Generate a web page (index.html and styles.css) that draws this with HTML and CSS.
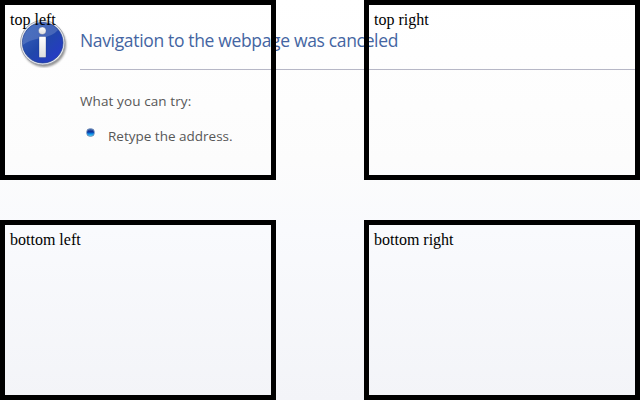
FILE: index.html
```html
<!DOCTYPE html>
<html lang="en">
<head>
<meta charset="utf-8">
<title>Navigation Canceled</title>
<link rel="stylesheet" href="styles.css">
</head>
<body>
<main class="error">
  <svg class="info" viewBox="0 0 48 48" width="48" height="48" aria-hidden="true">
    <defs>
      <linearGradient id="blue" x1="0" y1="0" x2="1" y2="1">
        <stop offset="0" stop-color="#3c68bd"/>
        <stop offset=".5" stop-color="#2147aa"/>
        <stop offset="1" stop-color="#2736cf"/>
      </linearGradient>
      <linearGradient id="shine" x1="0" y1="0" x2="1" y2="1">
        <stop offset="0" stop-color="#fff" stop-opacity=".08"/>
        <stop offset="1" stop-color="#fff" stop-opacity=".22"/>
      </linearGradient>
      <linearGradient id="glyph" x1="0" y1="0" x2="0" y2="1">
        <stop offset="0" stop-color="#fff"/>
        <stop offset="1" stop-color="#dedede"/>
      </linearGradient>
      <filter id="soft" x="-20%" y="-20%" width="140%" height="140%"><feGaussianBlur stdDeviation="1.1"/></filter>
    </defs>
    <circle cx="24" cy="25" r="22" fill="#555" opacity=".65" filter="url(#soft)"/>
    <circle cx="22.7" cy="22.7" r="22.2" fill="#e6e8ed" stroke="#9296a0" stroke-width=".8"/>
    <circle cx="22.7" cy="22.7" r="20.3" fill="url(#blue)" stroke="#1e3d91" stroke-width=".7"/>
    <path d="M2.8 25A20 20 0 0 1 38 10Q33 16 21 18Q9 20 2.8 25Z" fill="url(#shine)"/>
    <circle cx="22.3" cy="10.8" r="3.8" fill="url(#glyph)" stroke="#17317d" stroke-opacity=".5" stroke-width=".6"/>
    <rect x="19" y="16.5" width="7" height="21" rx=".8" fill="url(#glyph)" stroke="#17317d" stroke-opacity=".5" stroke-width=".6"/>
  </svg>
  <div class="content">
    <h1>Navigation to the webpage was canceled</h1>
    <p>What you can try:</p>
    <ul><li><i class="bullet"></i><span>Retype the address.</span></li></ul>
  </div>
</main>
<div class="boxes">
  <div class="box">top left</div>
  <div class="box">top right</div>
  <div class="box">bottom left</div>
  <div class="box">bottom right</div>
</div>
</body>
</html>
```
FILE: styles.css
```css
* { box-sizing: border-box; }
body {
  margin: 0;
  height: 400px;
  overflow: hidden;
  background: linear-gradient(#fff 0, #fcfcfc 160px, #f9fafd 230px, #f3f4f8 400px);
}
.error {
  display: flex;
  padding: 20px 0 0 20px;
  font-family: "Open Sans", "Noto Sans", sans-serif;
  color: #575757;
}
.info { flex: none; margin-right: 12px; }
.content { flex: 1; }
h1 {
  margin: 0;
  height: 50px;
  border-bottom: 1px solid #b6b7c6;
  font-size: 17.5px;
  line-height: 40px;
  font-weight: 400;
  color: #4465a2;
  letter-spacing: -0.34px;
}
p, ul { margin: 0; padding: 0; font-size: 13.5px; line-height: 20px; letter-spacing: 0; }
p { margin-top: 21px; letter-spacing: 0.1px; }
ul { margin-top: 15px; list-style: none; }
li { display: flex; }
.bullet {
  width: 9px;
  height: 9px;
  margin: 2px 13px 0 6px;
  border: 1px solid #708fbb;
  border-radius: 50%;
  background: linear-gradient(#4b6da9 0, #0b2d96 40%, #087ce0 65%, #42d5f5 100%);
}
.boxes {
  position: absolute;
  inset: 0;
  display: grid;
  grid-template: 180px 180px / 276px 276px;
  gap: 40px 88px;
}
.box {
  border: 5px solid #000;
  padding: 6px 5px 5px;
  font: 16px/18px "Liberation Serif", serif;
  color: #000;
}
```
